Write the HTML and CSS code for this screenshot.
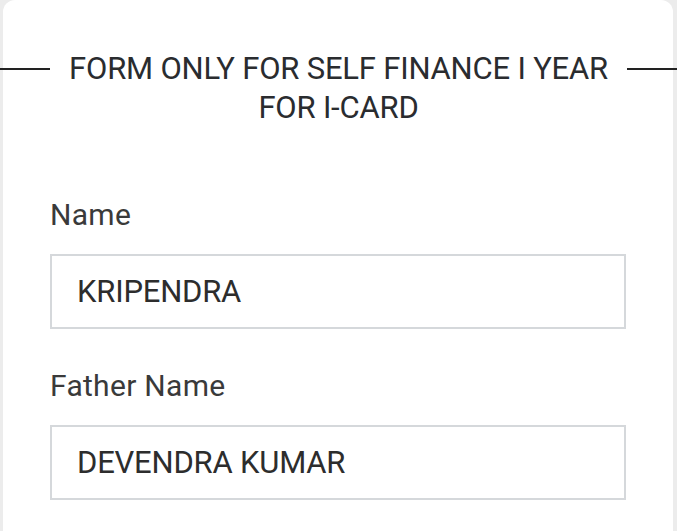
FILE: index.html
```html
<!DOCTYPE html>
<html lang="en">
<head>
    <meta charset="UTF-8">
    <meta name="viewport" content="width=device-width, initial-scale=1.0">
    <title>I-Card Form</title>
    <link rel="stylesheet" href="styles.css">
</head>
<body>
    <!-- Form card -->
    <div class="card">
        <h2 class="line-title"><span>FORM ONLY FOR SELF FINANCE I YEAR FOR I-CARD</span></h2>

        <div class="field">
            <label for="name">Name</label>
            <input id="name" type="text" value="KRIPENDRA" readonly>
        </div>

        <div class="field">
            <label for="father">Father Name</label>
            <input id="father" type="text" value="DEVENDRA KUMAR" readonly>
        </div>
    </div>
</body>
</html>
```

FILE: styles.css
```css
/* Body and general settings */
body {
    margin: 0;
    padding: 0;
    background-color: #ececec;
    font-family: Roboto, "Liberation Sans", sans-serif;
    overflow: hidden;
}

.card {
    background-color: #fff;
    margin: 0 4px 0 3px;
    padding: 49px 47px 0;
    border-radius: 12px 12px 0 0;
    height: 100vh;
    box-sizing: border-box;
}

/* Title with lines on both sides */
.line-title {
    display: flex;
    align-items: flex-start;
    gap: 19px;
    margin: 0 -51px 71px -50px;
    font-size: 31px;
    font-weight: 400;
    line-height: 39px;
    color: #2a2c2f;
    text-align: center;
}

.line-title::before,
.line-title::after {
    content: "";
    flex: 0 0 50px;
    height: 2px;
    margin-top: 19px;
    background-color: #222;
}

.line-title span {
    flex: 1;
    letter-spacing: -0.2px;
}

/* Fields */
.field {
    display: flex;
    flex-direction: column;
    margin-bottom: 40px;
}

.field:last-child {
    margin-bottom: 0;
}

.field label {
    font-size: 30px;
    line-height: 34px;
    letter-spacing: 0.3px;
    color: #3a3a3a;
    margin-bottom: 22px;
}

.field input {
    height: 75px;
    box-sizing: border-box;
    border: 2px solid #d5d8db;
    border-radius: 0;
    padding: 0 25px;
    font-family: Roboto, "Liberation Sans", sans-serif;
    font-size: 31px;
    letter-spacing: -0.2px;
    color: #2d2d2d;
    background: #fff;
    outline: none;
}
```
